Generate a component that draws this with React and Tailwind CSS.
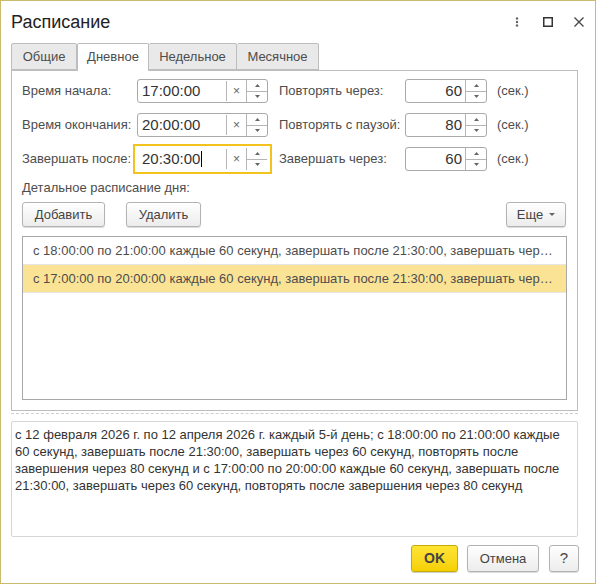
import React from 'react';

const font = "font-['Liberation_Sans',Arial,sans-serif]";

function Spinner({ className = '' }) {
    return (
        <div className={`flex flex-col w-[21px] h-full border-l border-[#b5b5b5] ${className}`}>
            <div className="flex-1 flex items-center justify-center border-b border-[#b5b5b5]">
                <svg width="5" height="3" viewBox="0 0 5 3"><path d="M2.5 0 L5 3 L0 3 Z" fill="#666" /></svg>
            </div>
            <div className="flex-1 flex items-center justify-center">
                <svg width="5" height="3" viewBox="0 0 5 3"><path d="M0 0 L5 0 L2.5 3 Z" fill="#666" /></svg>
            </div>
        </div>
    );
}

function TimeInput({ value, focused }) {
    const box = (
        <div className={`flex items-stretch w-[131px] h-[24px] bg-white rounded-[3px] border ${focused ? 'border-transparent' : 'border-[#a9a9a9]'}`}>
            <div className="flex-1 flex items-center pl-[4px] text-[15px] text-[#333]">
                {value}
                {focused && <span className="inline-block w-px h-[16px] bg-black ml-px" />}
            </div>
            <div className="w-[20px] flex items-center justify-center border-l border-[#b5b5b5] text-[12px] text-[#666] my-px">×</div>
            <Spinner />
        </div>
    );
    if (focused) {
        return <div className="-mx-[4px] -my-[3px] px-[2px] py-[1px] border-2 border-[#f2c31c]">{box}</div>;
    }
    return box;
}

function NumInput({ value }) {
    return (
        <div className="flex items-stretch w-[82px] h-[24px] bg-white rounded-[3px] border border-[#a9a9a9]">
            <div className="flex-1 flex items-center justify-end pr-[3px] text-[15px] text-[#333]">{value}</div>
            <Spinner />
        </div>
    );
}

function Btn({ children, className = '' }) {
    return (
        <div className={`h-[25px] flex items-center justify-center rounded-[3px] border border-[#b3b3b3] bg-gradient-to-b from-white to-[#ececec] shadow-[0_1px_1px_rgba(0,0,0,0.15)] text-[13px] text-[#444] ${className}`}>
            {children}
        </div>
    );
}

const rows = [
    ['Время начала:', '17:00:00', 'Повторять через:', '60'],
    ['Время окончания:', '20:00:00', 'Повторять с паузой:', '80'],
    ['Завершать после:', '20:30:00', 'Завершать через:', '60'],
];

export default function App() {
    return (
        <div className={`w-[596px] h-[584px] border border-[#cbbb6c] bg-white flex flex-col ${font} text-[13px] text-[#4d4d4d]`}>
            {/* Title bar */}
            <div className="h-[42px] flex items-center pl-[10px] pr-[11px]">
                <div className="flex-1 text-[18px] text-[#222]">Расписание</div>
                <svg width="4" height="10" viewBox="0 0 4 10" className="mr-[24px]">
                    <circle cx="2" cy="1.5" r="1.2" fill="#666" />
                    <circle cx="2" cy="5" r="1.2" fill="#666" />
                    <circle cx="2" cy="8.5" r="1.2" fill="#666" />
                </svg>
                <svg width="10" height="10" viewBox="0 0 10 10" className="mr-[21px]">
                    <rect x="0.75" y="0.75" width="8.5" height="8.5" fill="none" stroke="#333" strokeWidth="1.5" />
                </svg>
                <svg width="10" height="10" viewBox="0 0 10 10">
                    <path d="M0.5 0.5 L9.5 9.5 M9.5 0.5 L0.5 9.5" stroke="#444" strokeWidth="1.3" />
                </svg>
            </div>

            {/* Tabs */}
            <div className="flex ml-[10px] h-[27px] items-end relative z-10">
                <div className="w-[66px] h-[27px] flex items-center justify-center bg-[#e9e9e9] border border-[#bdbdbd] rounded-t-[2px]">Общие</div>
                <div className="w-[72px] h-[28px] -mb-px flex items-center justify-center bg-white border border-b-0 border-[#bdbdbd] rounded-t-[2px] pb-px">Дневное</div>
                <div className="w-[88px] h-[27px] flex items-center justify-center bg-[#e9e9e9] border border-l-0 border-[#bdbdbd] rounded-t-[2px]">Недельное</div>
                <div className="w-[82px] h-[27px] flex items-center justify-center bg-[#e9e9e9] border border-l-0 border-[#bdbdbd] rounded-t-[2px]">Месячное</div>
            </div>

            {/* Panel */}
            <div className="ml-[10px] w-[567px] h-[341px] border border-[#bdbdbd] pt-[8px] pl-[10px] pr-[10px] flex flex-col">
                <div className="flex flex-col gap-[10px]">
                    {rows.map(([l1, v1, l2, v2], i) => (
                        <div key={i} className="flex items-center h-[24px]">
                            <div className="w-[115px] whitespace-nowrap">{l1}</div>
                            <TimeInput value={v1} focused={i === 2} />
                            <div className="w-[126px] ml-[11px] whitespace-nowrap">{l2}</div>
                            <NumInput value={v2} />
                            <div className="ml-[10px]">(сек.)</div>
                        </div>
                    ))}
                </div>

                <div className="mt-[9px] h-[15px] leading-[15px]">Детальное расписание дня:</div>

                <div className="mt-[7px] flex items-center">
                    <Btn className="w-[83px]">Добавить</Btn>
                    <Btn className="w-[75px] ml-[21px]">Удалить</Btn>
                    <div className="flex-1" />
                    <Btn className="w-[60px] mr-[1px] gap-[6px]">
                        Еще
                        <svg width="6" height="3" viewBox="0 0 6 3"><path d="M0 0 L6 0 L3 3 Z" fill="#666" /></svg>
                    </Btn>
                </div>

                <div className="mt-[9px] w-[545px] h-[164px] border border-[#a8a8a8] flex flex-col">
                    <div className="h-[28px] flex items-center pl-[10px] pr-[8px] border-b border-[#e6e6e6] whitespace-nowrap overflow-hidden">
                        <span className="truncate">с 18:00:00 по 21:00:00 каждые 60 секунд, завершать после 21:30:00, завершать через 60 секунд, повторять после завершения через 80 секунд</span>
                    </div>
                    <div className="h-[28px] flex items-center pl-[10px] pr-[8px] bg-[#fbe396] border-b border-[#e6e6e6] whitespace-nowrap overflow-hidden">
                        <span className="truncate">с 17:00:00 по 20:00:00 каждые 60 секунд, завершать после 21:30:00, завершать через 60 секунд, повторять после завершения через 80 секунд</span>
                    </div>
                </div>
            </div>

            {/* Dashed separator */}
            <div className="ml-[10px] w-[567px] mt-[2px] border-t border-dashed border-[#cfcfcf]" />

            {/* Description */}
            <div className="ml-[10px] mt-[7px] w-[567px] h-[116px] border border-[#d6d6d6] rounded-[2px] pl-[3px] pt-[4px] leading-[17px] text-[#333]">
                <div className="whitespace-nowrap">с 12 февраля 2026 г. по 12 апреля 2026 г. каждый 5-й день; с 18:00:00 по 21:00:00 каждые</div>
                <div className="whitespace-nowrap">60 секунд, завершать после 21:30:00, завершать через 60 секунд, повторять после</div>
                <div className="whitespace-nowrap">завершения через 80 секунд и с 17:00:00 по 20:00:00 каждые 60 секунд, завершать после</div>
                <div className="whitespace-nowrap">21:30:00, завершать через 60 секунд, повторять после завершения через 80 секунд</div>
            </div>

            {/* Footer buttons */}
            <div className="mt-[8px] flex justify-end pr-[16px] gap-[9px]">
                <div className="w-[47px] h-[27px] flex items-center justify-center rounded-[3px] border border-[#c9ab00] bg-gradient-to-b from-[#ffe433] to-[#f5d000] shadow-[0_1px_1px_rgba(0,0,0,0.2)] text-[14px] font-bold text-[#444]">OK</div>
                <Btn className="w-[72px] h-[27px]">Отмена</Btn>
                <Btn className="w-[30px] h-[27px] ml-px text-[15px] text-[#333]">?</Btn>
            </div>
        </div>
    );
}
